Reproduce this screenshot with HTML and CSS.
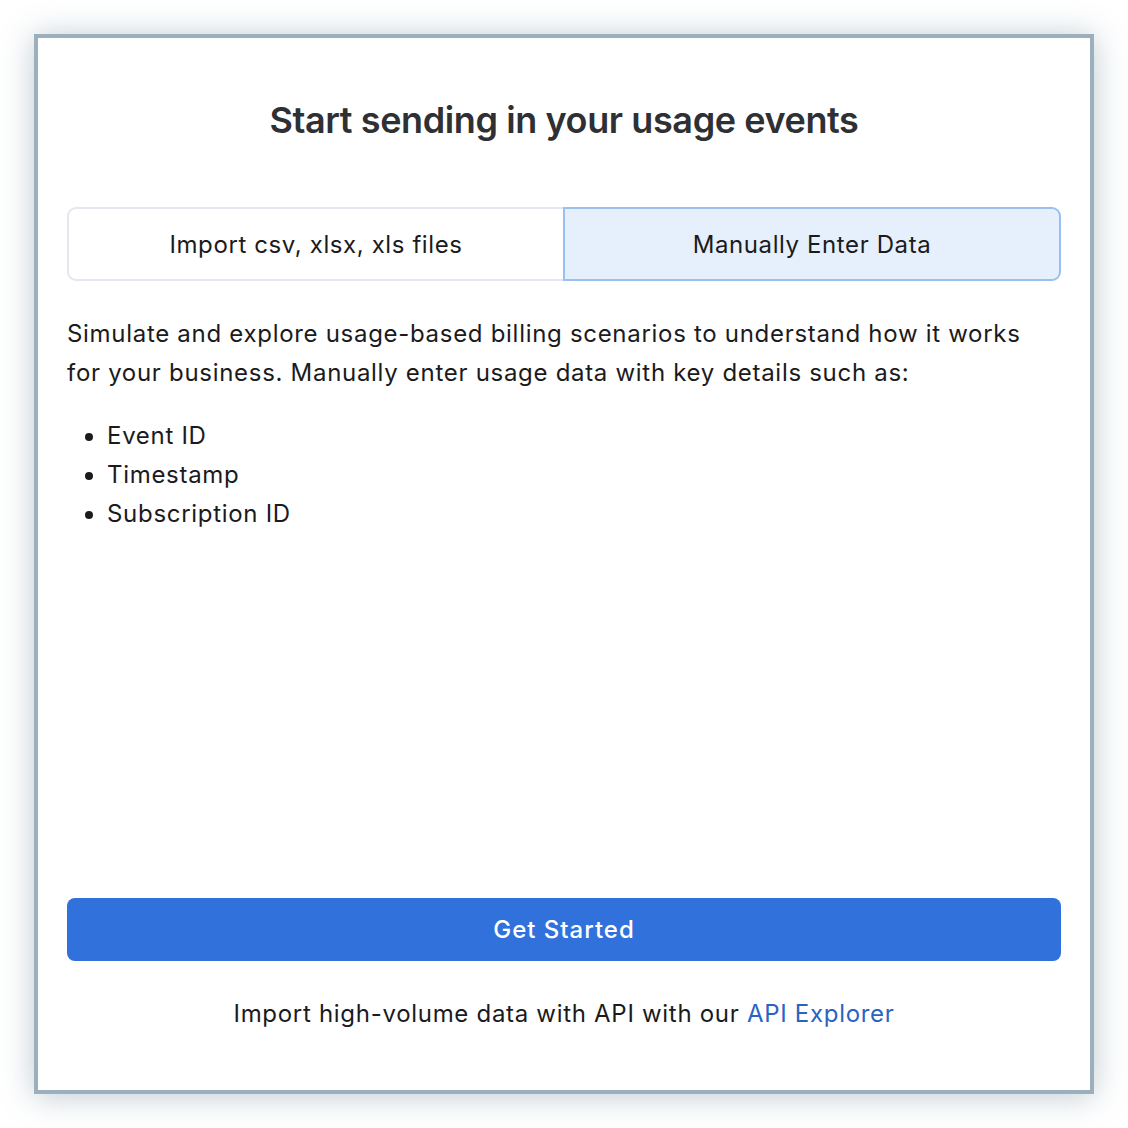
FILE: index.html
```html
<!DOCTYPE html>
<html lang="en">
<head>
    <meta charset="UTF-8">
    <meta name="viewport" content="width=device-width, initial-scale=1.0">
    <title>Usage events</title>
    <link rel="stylesheet" href="styles.css">
</head>
<body>
    <div class="card">
        <h1 class="card-title">Start sending in your usage events</h1>

        <div class="tabs">
            <button class="tab">Import csv, xlsx, xls files</button>
            <button class="tab active">Manually Enter Data</button>
        </div>

        <p class="intro">Simulate and explore usage-based billing scenarios to understand how it works for your business. Manually enter usage data with key details such as:</p>
        <ul class="details">
            <li>Event ID</li>
            <li>Timestamp</li>
            <li>Subscription ID</li>
        </ul>

        <button class="start-btn">Get Started</button>
        <p class="footer-note">Import high-volume data with API with our <a href="#">API Explorer</a></p>
    </div>
</body>
</html>
```

FILE: styles.css
```css
body {
    margin: 0;
    padding: 34px;
    background: #ffffff;
    font-family: Inter, "Noto Sans", sans-serif;
    color: #1b1b1d;
    letter-spacing: 0.7px;
}
.card {
    box-sizing: border-box;
    width: 1060px;
    height: 1060px;
    border: 4px solid #9bb0bc;
    background: white;
    box-shadow: 0 2px 30px rgba(110, 138, 156, 0.45);
    padding: 60px 29px 57px;
    display: flex;
    flex-direction: column;
}
.card-title {
    margin: 0;
    font-size: 36px;
    line-height: 44px;
    font-weight: 600;
    letter-spacing: -0.4px;
    text-align: center;
    color: #2e3034;
}
.tabs {
    display: flex;
    margin-top: 65px;
    height: 74px;
}
.tab {
    flex: 1;
    font-family: inherit;
    font-size: 24px;
    letter-spacing: 0.6px;
    color: #1b1b1d;
    background: white;
    border: 2px solid #e4e8ee;
    cursor: pointer;
}
.tab:first-child {
    border-radius: 9px 0 0 9px;
    border-right: none;
}
.tab.active {
    background: #e6f0fc;
    border-color: #98c0f1;
    border-radius: 0 9px 9px 0;
}
.intro {
    margin: 33px 0 0;
    font-size: 24px;
    line-height: 39px;
}
.details {
    margin: 24px 0 0;
    padding-left: 40px;
    font-size: 24px;
    line-height: 39px;
}
.start-btn {
    margin-top: auto;
    height: 63px;
    border: none;
    border-radius: 8px;
    background: #3171db;
    color: white;
    font-family: inherit;
    font-size: 24px;
    font-weight: 500;
    letter-spacing: 1px;
    cursor: pointer;
}
.footer-note {
    margin: 33px 0 0;
    font-size: 24px;
    line-height: 39px;
    text-align: center;
}
.footer-note a {
    color: #2a63c2;
    text-decoration: none;
}
```
